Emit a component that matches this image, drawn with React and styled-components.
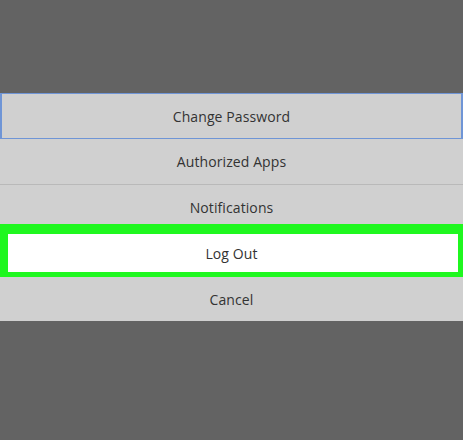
import React from "react";
import styled, { createGlobalStyle } from "styled-components";

const Global = createGlobalStyle`
  html, body { margin: 0; padding: 0; background: #636363; }
  body { width: 463px; height: 440px; overflow: hidden; }
`;

const Screen = styled.div`
  width: 463px;
  height: 440px;
  background: #636363;
  padding-top: 93px;
  box-sizing: border-box;
  font-family: "Open Sans", "Noto Sans", sans-serif;
`;

const Sheet = styled.div`
  display: flex;
  flex-direction: column;
  background: #d0d0d0;
`;

const Row = styled.div`
  position: relative;
  display: flex;
  align-items: center;
  justify-content: center;
  height: ${(p) => p.$h}px;
  box-sizing: border-box;
  background: ${(p) => (p.$active ? "#ffffff" : "#d0d0d0")};
  color: #333333;
  font-size: 14px;
  letter-spacing: 0.1px;
  border-bottom: ${(p) => (p.$last ? "none" : "1px solid #b9b9b9")};
  ${(p) =>
    p.$focused &&
    `
    border: 1px solid #6f95d6;
    border-left-width: 2px;
    border-right-width: 2px;
  `}
`;

const Highlight = styled.div`
  position: absolute;
  left: 0;
  right: 0;
  top: -7px;
  bottom: -6px;
  border-style: solid;
  border-color: #1ff71f;
  border-width: 10px 5px 10px 8px;
  pointer-events: none;
`;

export default function App() {
  return (
    <>
      <Global />
      <Screen>
        <Sheet>
          <Row $h={46} $focused>Change Password</Row>
          <Row $h={46}>Authorized Apps</Row>
          <Row $h={46}>Notifications</Row>
          <Row $h={46} $active>
            Log Out
            <Highlight />
          </Row>
          <Row $h={44} $last>Cancel</Row>
        </Sheet>
      </Screen>
    </>
  );
}
